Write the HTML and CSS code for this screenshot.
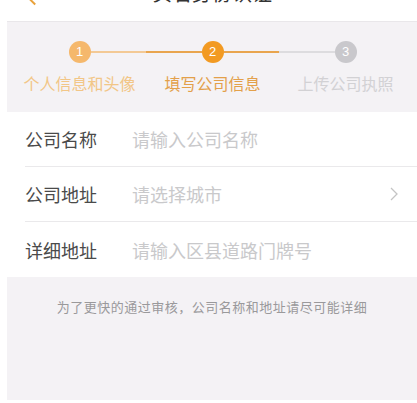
FILE: index.html
```html
<!DOCTYPE html>
<html lang="zh">
<head>
<meta charset="utf-8">
<link rel="stylesheet" href="styles.css">
</head>
<body>
<div class="page">
  <header class="nav">
    <span class="back"></span>
    <h1 class="title">实名身份认证</h1>
  </header>
  <section class="steps">
    <div class="step done">
      <div class="track"><span class="line"></span><span class="dot">1</span><span class="line right"></span></div>
      <div class="label">个人信息和头像</div>
    </div>
    <div class="step active">
      <div class="track"><span class="line left"></span><span class="dot">2</span><span class="line right"></span></div>
      <div class="label">填写公司信息</div>
    </div>
    <div class="step todo">
      <div class="track"><span class="line left"></span><span class="dot">3</span><span class="line"></span></div>
      <div class="label">上传公司执照</div>
    </div>
  </section>
  <section class="form">
    <div class="row">
      <span class="key">公司名称</span>
      <span class="ph">请输入公司名称</span>
    </div>
    <div class="row">
      <span class="key">公司地址</span>
      <span class="ph">请选择城市</span>
      <svg class="chev" width="8" height="14" viewBox="0 0 8 14"><path d="M1 1l6 6-6 6" fill="none" stroke="#c4c4c4" stroke-width="1.3"/></svg>
    </div>
    <div class="row last">
      <span class="key">详细地址</span>
      <span class="ph">请输入区县道路门牌号</span>
    </div>
  </section>
  <p class="hint">为了更快的通过审核，公司名称和地址请尽可能详细</p>
</div>
</body>
</html>
```
FILE: styles.css
```css
html, body {
  margin: 0;
  padding: 0;
  background: #ffffff;
  font-family: "Noto Sans CJK SC", "Noto Sans", sans-serif;
}
.page {
  margin-left: 7px;
  height: 400px;
  background: #f4f2f5;
  display: flex;
  flex-direction: column;
  overflow: hidden;
}
.nav {
  height: 21px;
  background: #ffffff;
  border-bottom: 1px solid #e9e7ea;
  position: relative;
  flex: none;
}
.title {
  margin: -20px 0 0;
  text-align: center;
  font-size: 20px;
  font-weight: 400;
  line-height: 26px;
  color: #333;
}
.back {
  position: absolute;
  left: 22px;
  top: -8px;
  width: 9px;
  height: 9px;
  border-left: 2px solid #e9a23b;
  border-bottom: 2px solid #e9a23b;
  transform: rotate(45deg);
}
.steps {
  display: grid;
  grid-template-columns: repeat(3, 133px);
  padding: 19px 0 0 6px;
  height: 71px;
  flex: none;
}
.track {
  display: flex;
  align-items: center;
  height: 22px;
}
.line {
  flex: 1;
  height: 1.5px;
}
.dot {
  width: 22px;
  height: 22px;
  border-radius: 50%;
  color: #fff;
  font-size: 13px;
  line-height: 22px;
  text-align: center;
  font-family: "Liberation Sans", Arial, sans-serif;
  flex: none;
}
.done .dot { background: #f5b86c; }
.done .line.right { background: #f3c995; }
.active .dot { background: #f29a22; }
.active .line { background: #e9a54e; }
.todo .dot { background: #c9c8cc; }
.todo .line.left { background: #dddcdf; }
.label {
  text-align: center;
  font-size: 16px;
  line-height: 22px;
  margin-top: 9px;
}
.done .label { color: #f2c687; }
.active .label { color: #e3a04a; }
.todo .label { color: #d2d1d4; }
.form {
  background: #ffffff;
  padding-left: 18px;
  flex: none;
}
.row {
  height: 54px;
  border-bottom: 1px solid #eae9eb;
  display: flex;
  align-items: center;
  font-size: 18px;
}
.row.last { border-bottom: none; height: 55px; }
.key {
  color: #4a4a4a;
  width: 107px;
  flex: none;
}
.ph {
  color: #c9c9cb;
  flex: 1;
}
.chev { margin-right: 19px; }
.hint {
  margin: 21px 0 0;
  text-align: center;
  font-size: 13px;
  letter-spacing: 0.5px;
  line-height: 18px;
  color: #9a999b;
}
```
